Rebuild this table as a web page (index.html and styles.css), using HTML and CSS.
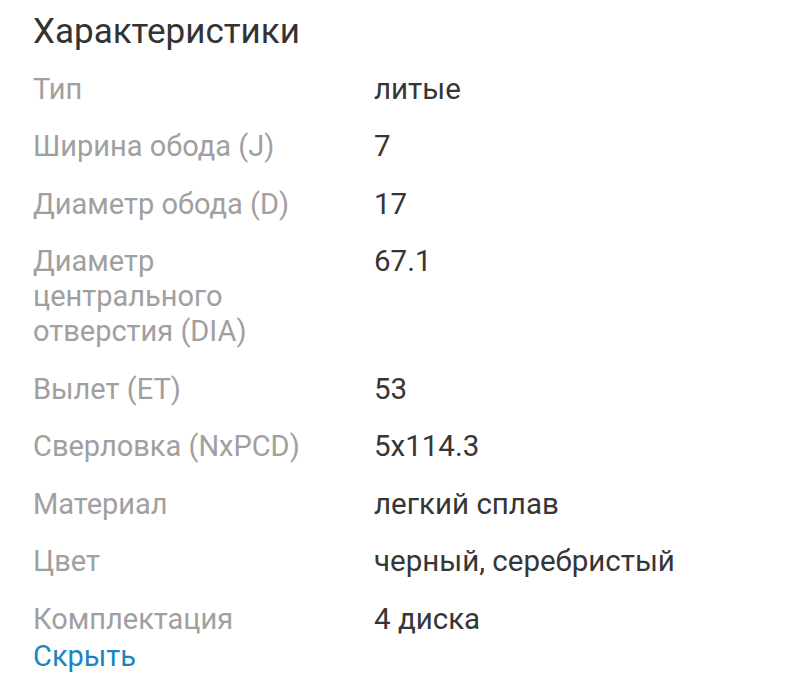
FILE: index.html
```html
<!DOCTYPE html>
<html lang="ru">
<head>
<meta charset="utf-8">
<link rel="stylesheet" href="styles.css">
</head>
<body>
<section class="specs">
  <h2 class="specs-title">Характеристики</h2>
  <dl class="specs-list">
    <div class="row"><dt>Тип</dt><dd>литые</dd></div>
    <div class="row"><dt>Ширина обода (J)</dt><dd>7</dd></div>
    <div class="row"><dt>Диаметр обода (D)</dt><dd>17</dd></div>
    <div class="row"><dt>Диаметр центрального отверстия (DIA)</dt><dd>67.1</dd></div>
    <div class="row"><dt>Вылет (ET)</dt><dd>53</dd></div>
    <div class="row"><dt>Сверловка (NxPCD)</dt><dd>5x114.3</dd></div>
    <div class="row"><dt>Материал</dt><dd>легкий сплав</dd></div>
    <div class="row"><dt>Цвет</dt><dd>черный, серебристый</dd></div>
    <div class="row"><dt>Комплектация</dt><dd>4 диска</dd></div>
  </dl>
  <a class="toggle" href="#">Скрыть</a>
</section>
</body>
</html>
```

FILE: styles.css
```css
html, body {
  margin: 0;
  padding: 0;
  background: #ffffff;
}
body {
  font-family: Roboto, "Noto Sans", sans-serif;
}
.specs {
  padding: 10px 33px 0 33px;
}
.specs-title {
  margin: 0;
  font-size: 35px;
  font-weight: 400;
  line-height: 44px;
  color: #333333;
}
.specs-list {
  margin: 0;
  padding: 0;
  display: flex;
  flex-direction: column;
  gap: 22.5px;
  margin-top: 17.5px;
}
.row {
  display: grid;
  grid-template-columns: 290px 1fr;
  column-gap: 51px;
}
.row dt, .row dd {
  margin: 0;
  font-size: 29px;
  line-height: 35px;
}
.row dt {
  color: #a0a0a0;
}
.row dd {
  font-size: 29.5px;
  color: #363636;
}
.toggle {
  display: inline-block;
  margin-top: 2px;
  font-size: 29px;
  line-height: 35px;
  color: #1a86c0;
  text-decoration: none;
}
```
